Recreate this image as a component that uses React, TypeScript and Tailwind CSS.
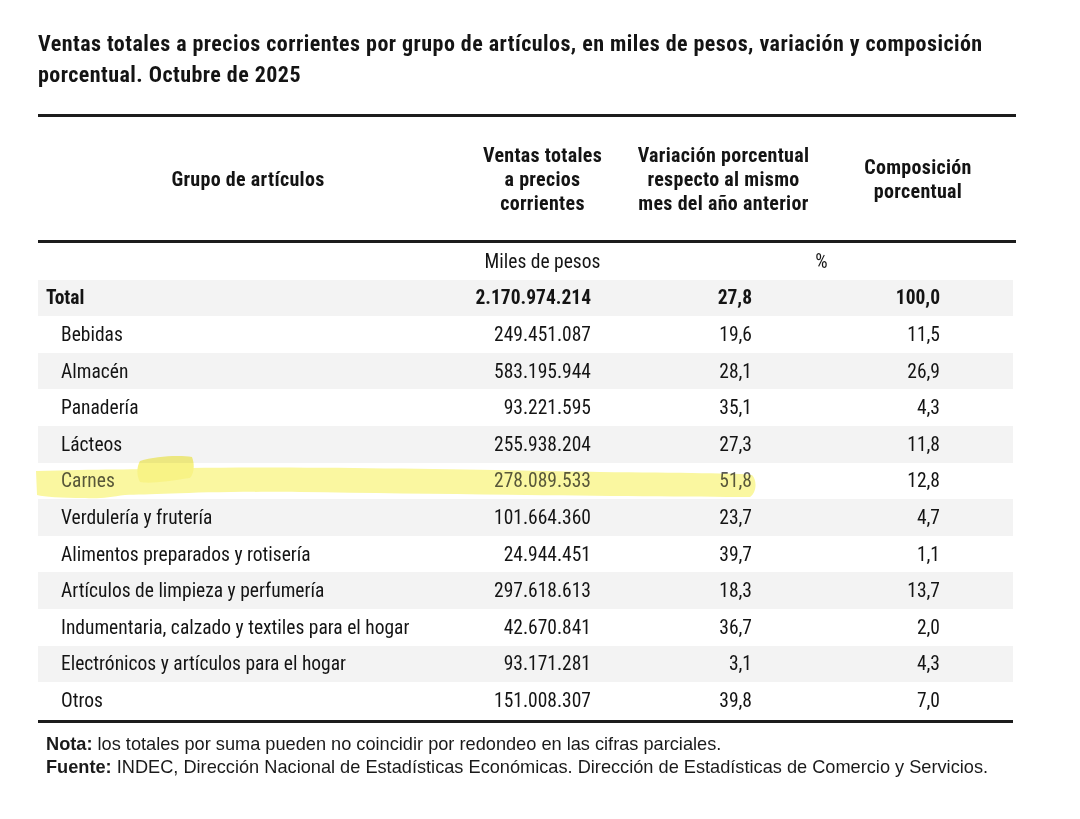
const rows = [
  { name: "Bebidas", ventas: "249.451.087", variacion: "19,6", comp: "11,5" },
  { name: "Almacén", ventas: "583.195.944", variacion: "28,1", comp: "26,9" },
  { name: "Panadería", ventas: "93.221.595", variacion: "35,1", comp: "4,3" },
  { name: "Lácteos", ventas: "255.938.204", variacion: "27,3", comp: "11,8" },
  { name: "Carnes", ventas: "278.089.533", variacion: "51,8", comp: "12,8", marked: true },
  { name: "Verdulería y frutería", ventas: "101.664.360", variacion: "23,7", comp: "4,7" },
  { name: "Alimentos preparados y rotisería", ventas: "24.944.451", variacion: "39,7", comp: "1,1" },
  { name: "Artículos de limpieza y perfumería", ventas: "297.618.613", variacion: "18,3", comp: "13,7" },
  { name: "Indumentaria, calzado y textiles para el hogar", ventas: "42.670.841", variacion: "36,7", comp: "2,0" },
  { name: "Electrónicos y artículos para el hogar", ventas: "93.171.281", variacion: "3,1", comp: "4,3" },
  { name: "Otros", ventas: "151.008.307", variacion: "39,8", comp: "7,0" },
]

function Highlight() {
  // marcador amarillo pasado a mano sobre la fila de Carnes
  return (
    <svg className="absolute inset-0 pointer-events-none mix-blend-multiply" width="1080" height="819" viewBox="0 0 1080 819">
      <path
        d="M36,471 C100,469 130,470 190,468 C300,466 500,470 600,472 C680,473 740,473 752,475 C757,480 757,492 750,497 C650,497 450,494 300,492 C200,491 150,495 125,495 C110,497 100,499 85,498 C60,498 45,497 37,495 Z"
        fill="#faf7a0"
      />
      <path
        d="M140,461 C155,456 180,455 192,457 C195,465 194,474 190,478 C170,481 150,484 140,482 C136,475 137,466 140,461 Z"
        fill="#f8f386"
      />
    </svg>
  )
}

export default function App() {
  return (
    <div className="relative w-[1080px] min-h-[819px] bg-white pl-[38px] pt-[28px] text-[#141414]">
      <h1 className="w-[990px] font-['Roboto_Condensed',sans-serif] text-[22px] font-bold leading-[31px] tracking-[0.45px]">
        Ventas totales a precios corrientes por grupo de artículos, en miles de pesos, variación y composición porcentual. Octubre de 2025
      </h1>

      <div className="mt-[24px] w-[978px] font-['Roboto_Condensed',sans-serif]">
        <div className="h-[3px] bg-[#1c1c1c]" />
        <div className="grid h-[123px] grid-cols-[396px_193px_193px_196px] items-center text-center text-[20px] font-bold leading-[24px] tracking-[0.3px]">
          <div className="pl-[24px]">Grupo de artículos</div>
          <div className="pl-[24px]">
            Ventas totales
            <br />a precios
            <br />corrientes
          </div>
          <div>
            Variación porcentual
            <br />respecto al mismo
            <br />mes del año anterior
          </div>
          <div>
            Composición
            <br />porcentual
          </div>
        </div>
        <div className="h-[3px] bg-[#1c1c1c]" />

        <div className="grid h-[36.7px] grid-cols-[396px_193px_389px] items-center text-[19.5px]">
          <div />
          <div className="pl-[24px] text-center">Miles de pesos</div>
          <div className="text-center">%</div>
        </div>

        <div className="grid h-[36.6px] w-[975px] grid-cols-[396px_193px_193px_193px] items-center bg-[#f3f3f3] text-[19.5px] font-bold">
          <div className="pl-[8px]">Total</div>
          <div className="pr-[36px] text-right">2.170.974.214</div>
          <div className="pr-[68px] text-right">27,8</div>
          <div className="pr-[73px] text-right">100,0</div>
        </div>

        {rows.map((r, i) => (
          <div
            key={r.name}
            className={
              "grid h-[36.6px] w-[975px] grid-cols-[396px_193px_193px_193px] items-center text-[19.5px] " +
              (i % 2 === 1 ? "bg-[#f3f3f3]" : "bg-white")
            }
          >
            <div className={"pl-[23px] " + (r.marked ? "text-[#5a5a5a]" : "")}>{r.name}</div>
            <div className={"pr-[36px] text-right " + (r.marked ? "text-[#5a5a5a]" : "")}>{r.ventas}</div>
            <div className={"pr-[68px] text-right " + (r.marked ? "text-[#5a5a5a]" : "")}>{r.variacion}</div>
            <div className="pr-[73px] text-right">{r.comp}</div>
          </div>
        ))}
        <div className="mt-[1px] h-[3px] w-[975px] bg-[#1c1c1c]" />
      </div>

      <div className="mt-[10px] pl-[8px] font-['Liberation_Sans',Arial,sans-serif] text-[18.2px] leading-[23px] text-[#1a1a1a]">
        <p>
          <span className="font-bold">Nota:</span> los totales por suma pueden no coincidir por redondeo en las cifras parciales.
        </p>
        <p>
          <span className="font-bold">Fuente:</span> INDEC, Dirección Nacional de Estadísticas Económicas. Dirección de Estadísticas de Comercio y Servicios.
        </p>
      </div>

      <Highlight />
    </div>
  )
}
